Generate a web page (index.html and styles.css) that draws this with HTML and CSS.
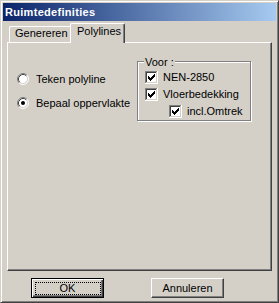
FILE: index.html
```html
<!DOCTYPE html>
<html>
<head>
<meta charset="utf-8">
<link rel="stylesheet" href="styles.css">
</head>
<body>
<svg width="0" height="0" class="defs">
  <defs>
    <symbol id="cb" viewBox="0 0 13 13">
      <rect x="0" y="0" width="13" height="13" fill="#ffffff"/>
      <rect x="0" y="0" width="12" height="1" fill="#808080"/>
      <rect x="0" y="0" width="1" height="12" fill="#808080"/>
      <rect x="1" y="1" width="10" height="1" fill="#404040"/>
      <rect x="1" y="1" width="1" height="10" fill="#404040"/>
      <rect x="1" y="11" width="11" height="1" fill="#d4d0c8"/>
      <rect x="11" y="1" width="1" height="11" fill="#d4d0c8"/>
      <path d="M3 5H4V6H5V7H6V6H7V5H8V4H9V3H10V6H9V7H8V8H7V9H6V10H5V9H4V8H3Z" fill="#000"/>
    </symbol>
    <symbol id="rb" viewBox="0 0 12 12">
      <circle cx="6" cy="6" r="5" fill="#ffffff"/>
      <path d="M2.11 9.89A5.5 5.5 0 0 1 9.89 2.11" fill="none" stroke="#808080"/>
      <path d="M9.89 2.11A5.5 5.5 0 0 1 2.11 9.89" fill="none" stroke="#ffffff"/>
      <path d="M2.82 9.18A4.5 4.5 0 0 1 9.18 2.82" fill="none" stroke="#404040"/>
      <path d="M9.18 2.82A4.5 4.5 0 0 1 2.82 9.18" fill="none" stroke="#d4d0c8"/>
    </symbol>
  </defs>
</svg>
<div class="window">
  <div class="titlebar">Ruimtedefinities</div>
  <div class="tabs">
    <div class="tab">Genereren</div>
    <div class="tab active">Polylines</div>
  </div>
  <div class="panel">
    <div class="options">
      <div class="radio-row">
        <svg class="radio" width="12" height="12"><use href="#rb"/></svg>
        <span>Teken polyline</span>
      </div>
      <div class="radio-row">
        <svg class="radio" width="12" height="12"><use href="#rb"/><circle cx="6" cy="6" r="2" fill="#000"/></svg>
        <span>Bepaal oppervlakte</span>
      </div>
    </div>
    <div class="group">
      <span class="legend">Voor :</span>
      <div class="check-row">
        <svg class="check" width="13" height="13"><use href="#cb"/></svg>
        <span>NEN-2850</span>
      </div>
      <div class="check-row">
        <svg class="check" width="13" height="13"><use href="#cb"/></svg>
        <span>Vloerbedekking</span>
      </div>
      <div class="check-row sub">
        <svg class="check" width="13" height="13"><use href="#cb"/></svg>
        <span>incl.Omtrek</span>
      </div>
    </div>
  </div>
  <div class="buttons">
    <button class="btn default"><span class="focus">OK</span></button>
    <button class="btn">Annuleren</button>
  </div>
</div>
</body>
</html>
```
FILE: styles.css
```css
html, body {
  margin: 0;
  padding: 0;
  background: #d4d0c8;
}

.defs {
  display: block;
  width: 0;
  height: 0;
  overflow: hidden;
}

.window {
  width: 279px;
  height: 303px;
  box-sizing: border-box;
  border: 1px solid;
  border-color: #d4d0c8 #404040 #404040 #d4d0c8;
  box-shadow: inset 1px 1px #ffffff, inset -1px -1px #808080;
  padding: 2px;
  background: #d4d0c8;
  font-family: "Liberation Sans", Arial, sans-serif;
  font-size: 11px;
  color: #000;
}

.titlebar {
  height: 18px;
  line-height: 18px;
  padding-left: 2px;
  background: linear-gradient(to right, #0a246a, #a6caf0);
  color: #ffffff;
  font-weight: bold;
  font-size: 11px;
  letter-spacing: 0.3px;
}

.tabs {
  display: flex;
  align-items: flex-end;
  height: 19px;
  margin: 2px 4px 0;
  padding-left: 2px;
}

.tab {
  box-sizing: border-box;
  height: 16px;
  width: 61px;
  border-top: 1px solid #ffffff;
  border-left: 1px solid #ffffff;
  border-top-left-radius: 2px;
  line-height: 13px;
  padding-left: 5px;
}

.tab.active {
  position: relative;
  z-index: 1;
  height: 20px;
  width: 55px;
  margin-bottom: -1px;
  padding-top: 1px;
  padding-left: 6px;
  border-right: 1px solid #404040;
  border-top-right-radius: 2px;
  box-shadow: inset -1px 0 #808080;
  background: #d4d0c8;
}

.panel {
  display: flex;
  align-items: flex-start;
  box-sizing: border-box;
  height: 229px;
  margin: 0 4px;
  border: 1px solid;
  border-color: #ffffff #404040 #404040 #ffffff;
  box-shadow: inset -1px -1px #808080;
}

.options {
  box-sizing: border-box;
  flex: none;
  width: 129px;
  margin-top: 29px;
  padding-left: 9px;
  display: flex;
  flex-direction: column;
  gap: 10px;
}

.radio-row {
  display: flex;
  align-items: center;
  height: 14px;
  line-height: 13px;
  white-space: nowrap;
}

.radio {
  flex: none;
  margin-right: 7px;
}

.group {
  position: relative;
  box-sizing: border-box;
  flex: none;
  width: 114px;
  height: 60px;
  margin-top: 18px;
  border: 1px solid #808080;
  box-shadow: inset 1px 1px #ffffff, 1px 1px #ffffff;
  padding: 9px 0 0 7px;
  display: flex;
  flex-direction: column;
  gap: 4px;
}

.legend {
  position: absolute;
  left: 6px;
  top: -6px;
  padding: 0 1px;
  line-height: 13px;
  background: #d4d0c8;
}

.check-row {
  display: flex;
  align-items: center;
  height: 13px;
  line-height: 13px;
  white-space: nowrap;
}

.check-row.sub {
  padding-left: 24px;
}

.check {
  flex: none;
  margin-right: 5px;
}

.buttons {
  display: flex;
  gap: 47px;
  margin-top: 7px;
  padding-left: 28px;
}

.btn {
  box-sizing: border-box;
  width: 73px;
  height: 20px;
  padding: 0;
  margin: 0;
  display: flex;
  align-items: center;
  justify-content: center;
  font-family: "Liberation Sans", Arial, sans-serif;
  font-size: 11px;
  line-height: 13px;
  color: #000;
  background: #d4d0c8;
  border: 1px solid;
  border-color: #ffffff #404040 #404040 #ffffff;
  box-shadow: inset -1px -1px #808080, inset 1px 1px #d4d0c8;
}

.btn.default {
  border: 1px solid #000000;
  box-shadow: inset 1px 1px #ffffff, inset -1px -1px #404040, inset -2px -2px #808080;
}

.focus {
  box-sizing: border-box;
  display: flex;
  align-items: center;
  justify-content: center;
  width: 66px;
  height: 13px;
  border: 1px dotted #000000;
}
```
